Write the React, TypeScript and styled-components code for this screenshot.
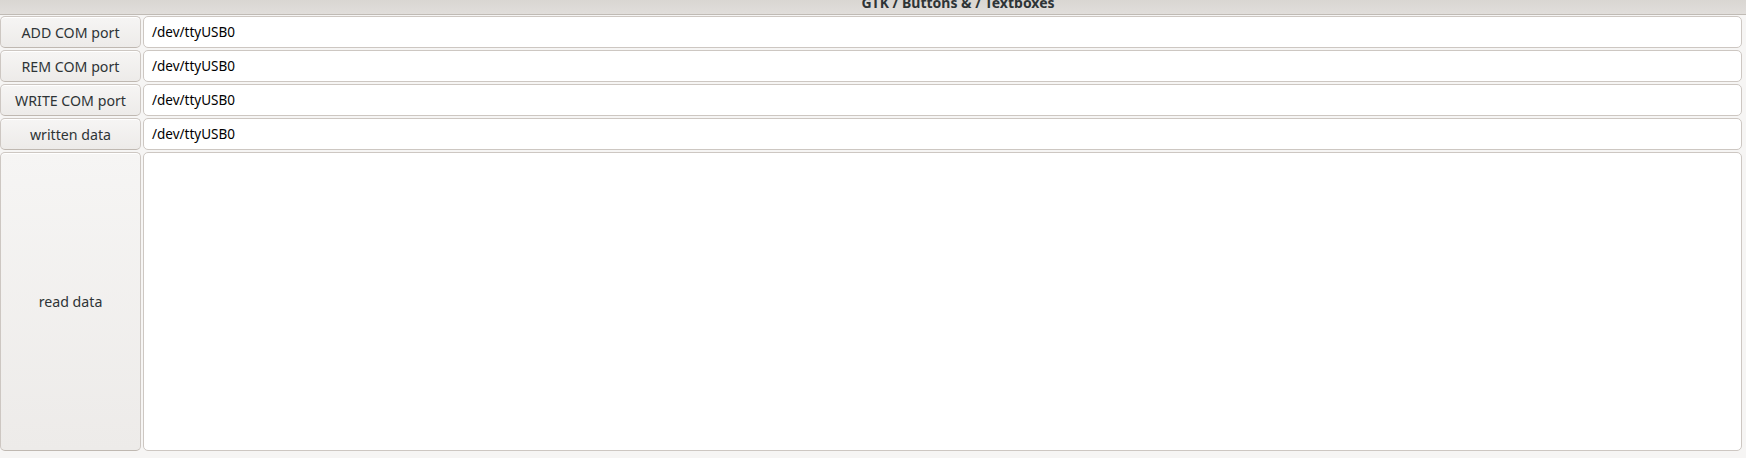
import * as React from "react";
import styled, {createGlobalStyle} from "styled-components";

const GlobalStyle = createGlobalStyle`
    html, body {
        margin: 0;
        padding: 0;
        background: #f6f5f4;
        font-family: "Noto Sans", "DejaVu Sans", sans-serif;
    }
`;

const Window = styled.div`
    width: 1746px;
    height: 458px;
    display: flex;
    flex-direction: column;
    background: #f6f5f4;
    overflow: hidden;
`;

const TitleBar = styled.div`
    height: 14px;
    flex: none;
    border-bottom: 1px solid #c0bbb5;
    background: linear-gradient(to bottom, #d9d6d2, #e1dedb);
    display: flex;
    justify-content: center;
    padding-left: 170px;
    overflow: hidden;
`;

const Title = styled.span`
    font-size: 14px;
    font-weight: 700;
    color: #2e3436;
    line-height: 14px;
    margin-top: -4px;
    white-space: nowrap;
`;

const Grid = styled.div`
    flex: 1;
    display: grid;
    grid-template-columns: 141px 1fr;
    grid-template-rows: repeat(4, 32px) 1fr;
    column-gap: 2px;
    row-gap: 2px;
    padding: 1px 4px 7px 0;
`;

const Button = styled.button`
    font-family: "Noto Sans", "DejaVu Sans", sans-serif;
    font-size: 14.2px;
    color: #2e3436;
    background: linear-gradient(to bottom, #f6f5f4, #edebe9);
    border: 1px solid #cdc7c2;
    border-bottom-color: #bfb8b1;
    border-radius: 5px;
    padding: 0;
    margin: 0;
    box-shadow: inset 0 1px #ffffff;
`;

const Entry = styled.div<{$tall?: boolean}>`
    background: #ffffff;
    border: 1px solid #cdc7c2;
    border-radius: 5px;
    display: flex;
    align-items: ${(p) => (p.$tall ? "flex-start" : "center")};
    padding: 0 8px;
    font-size: 13.5px;
    color: #000000;
`;

const rows = ["ADD COM port", "REM COM port", "WRITE COM port", "written data"];

export const App = () => {
    return (
        <Window>
            <GlobalStyle />
            <TitleBar>
                <Title>GTK / Buttons &amp; / Textboxes</Title>
            </TitleBar>
            <Grid>
                {rows.map((label) => (
                    <React.Fragment key={label}>
                        <Button>{label}</Button>
                        <Entry>/dev/ttyUSB0</Entry>
                    </React.Fragment>
                ))}
                <Button>read data</Button>
                <Entry $tall />
            </Grid>
        </Window>
    );
};

export default App;
